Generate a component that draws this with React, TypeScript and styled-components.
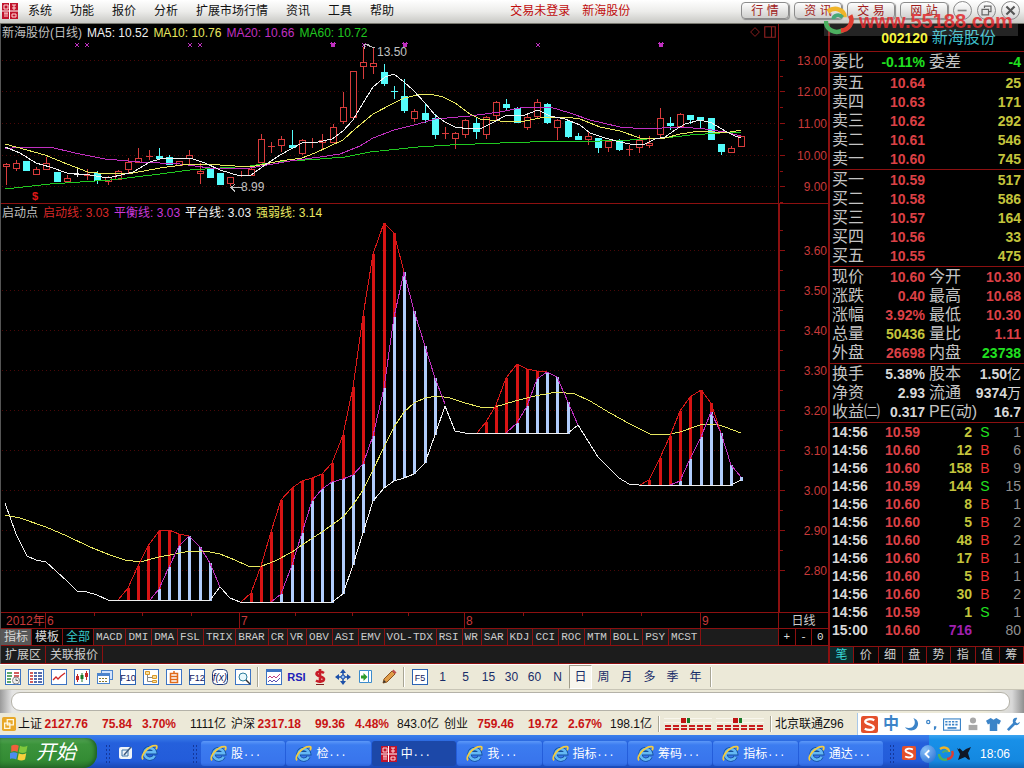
import React from "react";
import styled, { createGlobalStyle, css } from "styled-components";

const GlobalStyle = createGlobalStyle`
  * { box-sizing: border-box; }
  body {
    margin: 0;
    background: #000;
    font-family: "Liberation Sans", "Noto Sans CJK SC", sans-serif;
    font-size: 12px;
    line-height: 16px;
  }
  button {
    font: inherit;
    color: inherit;
    background: none;
    border: 0;
    padding: 0;
    margin: 0;
    white-space: nowrap;
  }
  svg { display: block; flex: none; }
`;

const LINE = "#8c1010";
const GRID = "#4a0808";
const RED = "#dc4046";
const YELLOW = "#c4c43c";
const GREEN = "#20e020";
const GREY = "#c4c4c4";

/* ---------- page frame ---------- */

const Page = styled.div`
  position: relative;
  display: flex;
  flex-direction: column;
  overflow: hidden;
`;

const MenuBar = styled.header`
  display: flex;
  align-items: center;
  height: 24px;
  padding: 0 4px 2px 2px;
  background: linear-gradient(#ffffff, #ececea 50%, #c8c8c4);
  border-bottom: 1px solid #77776f;
`;

const Menu = styled.nav`
  display: flex;
  gap: 18px;
  margin-left: 10px;
`;

const MenuItem = styled.button`
  color: #111;
`;

const Notice = styled.div`
  display: flex;
  flex: 1;
  gap: 12px;
  margin-left: 116px;
  color: #c00c0c;
`;

const Shortcuts = styled.div`
  display: flex;
  align-items: center;
  gap: 5px;
`;

const Pill = styled.button`
  width: 48px;
  height: 17px;
  line-height: 14px;
  color: #a01c1c;
  border: 1px solid #8c8c8c;
  border-radius: 4px;
  background: linear-gradient(#fdfdfd, #cfcfcd);
  box-shadow: 1px 1px 1px #8a8a8a;
`;

const WindowButton = styled.button`
  display: grid;
  place-items: center;
  width: 19px;
  height: 19px;
  border: 1px solid #8a8a8a;
  border-radius: 50%;
  background: linear-gradient(#fff, #d4d4d4);
`;

const Watermark = styled.div`
  position: absolute;
  top: 6px;
  right: 6px;
  display: flex;
  align-items: center;
  gap: 5px;
  width: 194px;
  height: 30px;
  color: rgba(226, 40, 44, 0.85);
  font-size: 20px;
  font-weight: 700;
  line-height: 30px;
  background: linear-gradient(transparent 18px, rgba(255, 255, 255, 0.14) 18px);
  pointer-events: none;
`;

const Main = styled.main`
  display: grid;
  grid-template-columns: minmax(0, 1fr) 196px;
`;

/* ---------- charts ---------- */

const ChartArea = styled.section`
  display: grid;
  grid-template-columns: minmax(0, 1fr) 50px;
  grid-template-rows: 180px 409px 16px 17px 18px;
  border-left: 1px solid #555;
`;

const Pane = styled.div`
  display: flex;
  flex-direction: column;
  min-width: 0;
  border-bottom: 1px solid ${LINE};
`;

const Axis = styled.div<{ $wide?: boolean }>`
  border-left: ${(p) => (p.$wide ? 2 : 1)}px solid ${LINE};
  border-bottom: 1px solid ${LINE};
`;

const Legend = styled.div`
  display: flex;
  gap: 5px;
  height: 16px;
  padding: 0 2px 0 1px;
  line-height: 18px;
  white-space: nowrap;
`;

const LegendText = styled.span<{ $color: string }>`
  color: ${(p) => p.$color};
`;

const LegendTools = styled.div`
  display: flex;
  gap: 4px;
  align-items: center;
  margin-left: auto;
`;

const Drawing = styled.svg<{ $height: number }>`
  width: 100%;
  height: ${(p) => p.$height}px;
  font-size: 12px;
`;

const TabStrip = styled.div`
  display: flex;
  min-width: 0;
  overflow: hidden;
  background: #1c1c1c;
  border-bottom: 1px solid ${LINE};
`;

const IndicatorTab = styled.button`
  padding: 0 3px 0 2px;
  color: #ccc;
  font-family: "Liberation Mono", monospace;
  font-size: 11px;
  border-right: 1px solid ${LINE};
`;

const GroupTab = styled.button<{ $tone?: "on" | "cyan" }>`
  padding: 0 3px;
  color: ${(p) => (p.$tone === "cyan" ? "#38c8c8" : "#d8d8d8")};
  background: ${(p) => (p.$tone === "on" ? "#585858" : "#050505")};
  border-right: 1px solid ${LINE};
`;

const ExtraStrip = styled(TabStrip)`
  grid-column: 1 / -1;
`;

const ExtraTab = styled.button`
  padding: 0 4px;
  color: #ccc;
  border-right: 1px solid ${LINE};
`;

const PeriodCell = styled.div`
  color: #ccc;
  text-align: center;
  border-left: 1px solid ${LINE};
  border-bottom: 1px solid ${LINE};
`;

const ZoomCell = styled.div`
  display: flex;
  border-left: 1px solid ${LINE};
  border-bottom: 1px solid ${LINE};
`;

const ZoomButton = styled.button`
  flex: 1;
  color: #ddd;
  font-family: "Liberation Mono", monospace;
  font-size: 11px;
  & + & { border-left: 1px solid ${LINE}; }
`;

/* ---------- quote panel ---------- */

const Panel = styled.aside`
  display: flex;
  flex-direction: column;
  border-left: 2px solid ${LINE};
  border-bottom: 1px solid ${LINE};
`;

const StockTitle = styled.h1`
  display: flex;
  justify-content: center;
  gap: 4px;
  height: 27px;
  margin: 0;
  padding-left: 23px;
  color: #3cbcc8;
  font-size: 16px;
  font-weight: 400;
  line-height: 28px;
`;

const Code = styled.span`
  color: #f4f430;
  font-size: 14px;
  font-weight: 700;
`;

const Block = styled.div<{ $grow?: boolean }>`
  flex: ${(p) => (p.$grow ? 1 : "none")};
  padding: 0 3px 1px 2px;
  border-top: 1px solid ${LINE};
`;

const DataTable = styled.table<{ $row: number }>`
  width: 100%;
  table-layout: fixed;
  border-collapse: collapse;
  tr { height: ${(p) => p.$row}px; }
  th, td {
    padding: 0;
    line-height: 16px;
    white-space: nowrap;
    vertical-align: middle;
  }
`;

const Label = styled.th<{ $inset?: boolean }>`
  && { padding-left: ${(p) => (p.$inset ? 4 : 0)}px; }
  color: ${GREY};
  font-size: 16px;
  font-weight: 400;
  text-align: left;
`;

const Value = styled.td<{ $color: string; $light?: boolean }>`
  color: ${(p) => p.$color};
  font-size: 14px;
  font-weight: ${(p) => (p.$light ? 400 : 700)};
  text-align: right;
`;

const Unit = styled.span`
  font-weight: 400;
  line-height: 1;
`;

const Side = styled(Value)`
  text-align: center;
`;

const Time = styled(Value)`
  text-align: left;
`;

const PanelTabs = styled.div`
  display: flex;
  height: 17px;
  border-top: 1px solid ${LINE};
`;

const PanelTab = styled.button<{ $active?: boolean }>`
  flex: 1;
  color: ${(p) => (p.$active ? "#38d8d8" : "#ccc")};
  background: ${(p) => (p.$active ? "#0c2c2c" : "#080808")};
  border-right: 1px solid ${LINE};
`;

/* ---------- toolbar ---------- */

const ToolBar = styled.div`
  display: flex;
  height: 25px;
  padding-left: 1px;
  background: #ece9d8;
  border-top: 1px solid #fff;
`;

const pressed = css`
  background: #f8f6ee;
  border: 1px solid #a8a594;
  border-color: #a09c8a #fff #fff #a09c8a;
`;

const Tool = styled.button<{ $on?: boolean; $bold?: boolean }>`
  display: grid;
  place-items: center;
  width: 23px;
  color: ${(p) => (p.$bold ? "#2020b8" : "#182c68")};
  font-size: ${(p) => (p.$bold ? 11 : 12)}px;
  font-weight: ${(p) => (p.$bold ? 700 : 400)};
  ${(p) => p.$on && pressed}
`;

const Rule = styled.span`
  width: 2px;
  margin: 2px 3px;
  border-left: 1px solid #a8a594;
  border-right: 1px solid #fff;
`;

const ScrollBar = styled.div`
  height: 24px;
  padding: 2px 14px 2px 11px;
  background: linear-gradient(90deg, #9a9a9a, #e4e4e4 12px, #ece9d8 40px, #ece9d8 calc(100% - 40px), #d8d8d8 calc(100% - 12px), #8f8f8f);
  border-top: 1px solid #c8c5b6;
`;

const Thumb = styled.div`
  height: 19px;
  background: #fff;
  border: 1px solid #b4b2a8;
  border-radius: 9px;
`;

/* ---------- status bar ---------- */

const StatusBar = styled.footer`
  display: flex;
  align-items: center;
  height: 22px;
  padding-left: 2px;
  color: #111;
  background: #ece9d8;
  white-space: nowrap;
`;

const IndexQuote = styled.div`
  display: grid;
  grid-template-columns: 25px 45px 44px 44px 50px;
  margin-left: 2px;
  margin-right: 3px;
  text-align: right;
`;

const IndexName = styled.span`
  text-align: left;
`;

const IndexValue = styled.b`
  color: #c81414;
`;

const ImeBar = styled.div`
  display: flex;
  flex: none;
  align-items: center;
  justify-content: space-around;
  width: 167px;
  height: 22px;
  margin-left: auto;
  color: #3c84c8;
  font-size: 16px;
  font-weight: 700;
  background: #fff;
  border-left: 1px solid #a8c8e8;
`;

/* ---------- task bar ---------- */

const TaskBar = styled.div`
  display: flex;
  height: 33px;
  color: #fff;
  background: linear-gradient(#3a80ec, #3272e4 4px, #2560dc 8px, #235cda 26px, #1a48b4);
`;

const StartButton = styled.button`
  display: flex;
  align-items: center;
  gap: 6px;
  width: 97px;
  height: 30px;
  margin-top: 3px;
  padding: 0 0 3px 10px;
  font-size: 20px;
  font-style: italic;
  border-radius: 0 10px 14px 0;
  background: linear-gradient(#5cac5c, #3c943c 6px, #348c34 22px, #2a702c);
  box-shadow: inset -2px 0 4px #1c5c20;
`;

const Grip = styled.span<{ $gap: number }>`
  width: 5px;
  margin: 9px ${(p) => p.$gap}px 4px;
  background-image: radial-gradient(circle, #14389c 1px, transparent 1px);
  background-size: 3px 4px;
`;

const QuickLaunch = styled.div`
  display: flex;
  align-items: center;
  gap: 7px;
  width: 70px;
  padding-top: 2px;
`;

const TaskList = styled.div`
  display: flex;
  flex: 1;
  gap: 1px;
  padding: 6px 0 2px;
`;

const Task = styled.button<{ $active?: boolean }>`
  display: flex;
  flex: 1 1 0;
  align-items: center;
  gap: 4px;
  max-width: 160px;
  padding-left: 9px;
  border-radius: 3px;
  background: ${(p) =>
    p.$active
      ? "#1c48a8"
      : "linear-gradient(#5c98f8, #3c7cf0 4px, #3874ec 22px, #2c64d8)"};
`;

const Dots = styled.span`
  margin-left: -4px;
  font-family: "Liberation Mono", monospace;
  font-size: 10px;
`;

const LanguageBar = styled.div`
  display: flex;
  width: 46px;
`;

const LanguageButton = styled.button`
  display: grid;
  place-items: center;
  width: 18px;
  padding-top: 2px;
`;

const Tray = styled.div`
  display: flex;
  align-items: center;
  gap: 2px;
  width: 95px;
  padding: 4px 0 0 8px;
  background: linear-gradient(#3ca4f0, #1890e8 5px, #1488e0 26px, #1068b8);
`;

const Hide = styled.button`
  display: grid;
  place-items: center;
  width: 16px;
  height: 18px;
  margin-left: -17px;
  border-radius: 50%;
  background: radial-gradient(circle at 5px 5px, #88c0f8, #2068d0);
`;

const Clock = styled.time`
  margin-left: 6px;
`;

/* ---------- chart data, in drawing units ---------- */

const barX = (i: number) => Math.round(5.5 + 10.22 * i);

// kind, high, body top, body bottom, low
type Candle = [string, number, number, number, number];
const candles: Candle[] = [
  ["r", 163, 164, 166, 185], ["r", 160, 163, 168, 171], ["c", 161, 161, 170, 170], ["r", 167, 169, 174, 174],
  ["r", 157, 163, 169, 169], ["c", 172, 172, 181, 181], ["r", 175, 178, 181, 181], ["w", 168, 174, 174, 177],
  ["r", 169, 175, 175, 180], ["c", 171, 173, 180, 184], ["r", 176, 177, 181, 185], ["r", 170, 171, 179, 179],
  ["r", 158, 162, 169, 173], ["r", 148, 158, 162, 162], ["r", 150, 156, 156, 160], ["c", 148, 156, 158, 160],
  ["c", 155, 157, 164, 164], ["r", 161, 161, 165, 165], ["r", 150, 155, 158, 164], ["r", 163, 171, 173, 184],
  ["c", 168, 169, 177, 178], ["c", 173, 173, 184, 184], ["r", 177, 177, 183, 186], ["r", 171, 175, 175, 177],
  ["r", 165, 169, 175, 175], ["r", 134, 139, 162, 162], ["r", 142, 146, 146, 153], ["r", 136, 139, 145, 152],
  ["c", 130, 145, 147, 149], ["r", 139, 140, 153, 155], ["r", 138, 142, 142, 148], ["r", 134, 140, 142, 150],
  ["r", 124, 127, 142, 143], ["r", 92, 107, 121, 124], ["r", 71, 71, 117, 120], ["r", 47, 62, 66, 79],
  ["r", 48, 63, 66, 74], ["c", 64, 72, 83, 86], ["c", 86, 91, 91, 99], ["c", 79, 96, 110, 113],
  ["r", 109, 111, 118, 122], ["c", 104, 113, 119, 123], ["c", 114, 118, 134, 139], ["r", 127, 133, 133, 139],
  ["r", 132, 133, 138, 149], ["r", 119, 120, 134, 138], ["c", 117, 123, 131, 139], ["r", 116, 117, 134, 139],
  ["r", 101, 102, 115, 121], ["c", 99, 104, 107, 110], ["c", 107, 108, 122, 123], ["r", 115, 117, 127, 130],
  ["r", 99, 102, 116, 119], ["c", 103, 104, 122, 124], ["r", 119, 120, 127, 140], ["c", 120, 121, 136, 138],
  ["c", 133, 136, 139, 140], ["r", 131, 136, 139, 145], ["c", 138, 138, 147, 153], ["r", 140, 141, 147, 152],
  ["c", 139, 140, 149, 151], ["r", 145, 149, 149, 156], ["r", 135, 140, 147, 153], ["r", 136, 143, 145, 148],
  ["r", 108, 118, 134, 137], ["c", 117, 123, 125, 130], ["r", 113, 114, 126, 126], ["c", 115, 115, 119, 124],
  ["c", 117, 117, 119, 129], ["c", 118, 118, 139, 139], ["c", 144, 144, 151, 155], ["r", 146, 148, 152, 153],
  ["r", 136, 136, 146, 146],
];

const averages = [
  { color: "#20c820", points: "5,189 50,184 110,180 160,174 190,170 220,168 250,166 275,162 320,159 345,157 370,152 418,147 450,145 500,143 560,141 600,141 630,140 665,138 690,135 720,133 741,132" },
  { color: "#c030c0", points: "5,149 20,147 50,147 75,153 105,159 140,162 180,164 210,168 250,168 290,161 320,157 340,154 360,146 373,138 394,130 418,124 435,119 470,116 500,112 520,108 550,107 570,113 590,120 620,127 645,129 680,127 705,129 725,132 741,136" },
  { color: "#e8e860", points: "5,144 45,155 67,164 88,172 108,174 133,173 160,168 190,164 220,165 250,167 280,161 302,158 315,153 330,146 343,140 355,129 373,114 394,103 404,98 418,95 430,94 443,97 455,103 470,114 480,119 500,121 525,121 545,117 565,117 580,119 600,127 620,131 640,138 650,139 665,138 680,134 700,131 725,133 741,130" },
  { color: "#f0f0f0", points: "5,147 20,153 36,163 50,167 67,173 90,175 108,178 125,174 133,172 150,162 160,159 190,158 205,163 220,170 240,176 251,175 265,165 280,155 302,143 318,142 332,139 343,131 353,120 363,103 373,87 385,77 394,74 404,82 413,90 425,103 435,115 445,122 455,127 470,129 482,128 492,123 505,116 525,115 538,110 550,116 565,119 580,125 590,133 605,138 620,142 630,144 645,144 655,139 665,137 675,130 685,124 700,120 712,123 725,131 735,136 741,138" },
];

const signalLines = [
  { color: "#f0f0f0", points: "5,503 16,534 27,556 36,560 46,562 56,571 67,581 77,591 87,592 97,595 108,600 210,600 220,587 230,598 240,602 332,602 343,594 353,565 363,533 373,501 384,488 394,481 404,478 414,474 425,463 435,435 445,406 455,431 465,433 568,433 578,425 598,457 609,468 619,478 629,484 639,485 731,485 741,480" },
  { color: "#e8e860", points: "5,515 20,518 46,527 67,536 90,547 110,555 125,560 140,562 159,557 175,554 190,551 205,551 220,554 235,560 248,566 262,566 275,561 292,552 305,543 322,532 343,517 353,505 363,490 373,470 384,447 394,427 404,412 414,403 425,398 438,396 450,398 465,403 480,407 495,407 515,401 535,396 557,392 575,394 590,401 610,413 630,424 650,434 665,435 680,432 700,425 715,424 725,427 741,433" },
  { color: "#d81818", points: "118,600 128,588 138,566 148,546 159,531 169,530 179,534 189,536" },
  { color: "#d81818", points: "241,602 251,593 261,566 271,532 281,500 292,488 302,481 312,478 322,474 332,463 343,435 353,387 363,316 373,254 384,223 394,233 404,272" },
  { color: "#d81818", points: "477,433 486,422 496,405 506,378 517,364 527,369 537,371 547,372" },
  { color: "#d81818", points: "640,485 649,480 660,458 670,436 680,411 690,397 701,390 711,403 721,433" },
  { color: "#c030c0", points: "150,600 159,589 169,567 179,546 189,536 200,547 210,563 220,587" },
  { color: "#c030c0", points: "271,602 281,594 292,565 302,533 312,501 322,489 332,482 343,479 353,475 363,464 373,436 384,388 394,317 404,272 414,311 425,346 435,378 445,404" },
  { color: "#c030c0", points: "506,433 517,423 527,406 537,379 547,372 557,377 568,402 578,425" },
  { color: "#c030c0", points: "670,485 680,481 690,459 701,437 711,412 721,433 731,465 741,477" },
];

// x, top of red part, top of blue part, foot
const columns: number[][] = [
  [128, 588, 601, 601], [138, 566, 601, 601], [148, 546, 601, 601], [159, 531, 589, 601], [169, 530, 567, 601],
  [179, 534, 546, 601], [189, 536, 536, 601], [200, 547, 547, 601], [210, 563, 563, 601],
  [251, 593, 603, 603], [261, 566, 603, 603], [271, 532, 603, 603], [281, 500, 594, 603], [292, 488, 565, 603],
  [302, 481, 533, 603], [312, 478, 501, 603], [322, 474, 489, 603], [332, 463, 482, 603], [343, 435, 479, 594],
  [353, 387, 475, 565], [363, 316, 464, 533], [373, 254, 436, 501], [384, 223, 388, 488], [394, 233, 317, 481],
  [404, 272, 272, 478], [414, 311, 311, 474], [425, 346, 346, 463], [435, 378, 378, 435],
  [486, 422, 434, 434], [496, 405, 434, 434], [506, 378, 434, 434], [517, 364, 423, 434], [527, 369, 406, 434],
  [537, 371, 379, 434], [547, 372, 372, 434], [557, 377, 377, 434], [568, 402, 402, 434],
  [649, 480, 486, 486], [660, 458, 486, 486], [670, 436, 486, 486], [680, 411, 481, 486], [690, 397, 459, 486],
  [701, 390, 437, 486], [711, 403, 412, 486], [721, 433, 433, 486], [731, 465, 465, 486], [741, 477, 477, 481],
];

const priceLevels = [60, 91, 123, 155, 186];
const signalLevels = [250, 290, 330, 370, 410, 450, 490, 530, 570];

const GridLines = ({ levels }: { levels: number[] }) => (
  <>
    {levels.map((y) => (
      <line key={y} x1="2" x2="778" y1={y + 0.5} y2={y + 0.5} stroke={GRID} strokeDasharray="1 3" />
    ))}
  </>
);

const Lines = ({ items }: { items: { color: string; points: string }[] }) => (
  <>
    {items.map((l) => (
      <polyline key={l.points} points={l.points} fill="none" stroke={l.color} />
    ))}
  </>
);

const PriceChart = () => (
  <Drawing $height={163} viewBox="1 40 777 163" preserveAspectRatio="xMinYMin meet" shapeRendering="crispEdges">
    <GridLines levels={priceLevels} />
    {candles.map(([kind, hi, top, bottom, lo], i) => {
      const x = barX(i);
      const color = kind === "r" ? "#d83c3c" : kind === "c" ? "#54fcfc" : "#f4f4f4";
      return (
        <g key={i} stroke={color} fill={kind === "r" ? "#000" : color}>
          <line x1={x + 0.5} x2={x + 0.5} y1={hi} y2={lo} />
          {top === bottom ? (
            <line x1={x - 3} x2={x + 4} y1={top + 0.5} y2={top + 0.5} />
          ) : (
            <rect x={x - 2.5} y={top + 0.5} width="6" height={bottom - top} />
          )}
        </g>
      );
    })}
    <Lines items={averages} />
    {[77, 87, 190, 200, 333, 364, 405, 538, 661].map((x) => (
      <path key={x} d={`M${x - 2} 43l4 4m0-4l-4 4`} stroke="#c030c0" strokeWidth={[333, 405, 661].includes(x) ? 2 : 1} />
    ))}
    <path d="M375 48L364 44m0 5v-5h5M242 187.500h-11m4-3l-4 3 4 4" stroke="#c0c0c0" fill="none" />
    <text x="377" y="56" fill="#c0c0c0">13.50</text>
    <text x="241" y="191" fill="#c0c0c0">8.99</text>
    <text x="32" y="200" fill="#e01818" fontSize="11" fontWeight="700">$</text>
  </Drawing>
);

const SignalChart = () => (
  <Drawing $height={392} viewBox="1 220 777 392" preserveAspectRatio="xMinYMin meet" shapeRendering="crispEdges">
    <GridLines levels={signalLevels} />
    {columns.map(([x, red, blue, foot]) => (
      <g key={x}>
        <rect x={x - 1} y={red} width="3" height={blue - red} fill="#d81414" />
        <rect x={x - 1} y={blue} width="3" height={foot - blue} fill="#b0ccfc" />
      </g>
    ))}
    <Lines items={signalLines} />
  </Drawing>
);

const AxisScale = ({ top, height, levels, minor, first, step }: {
  top: number; height: number; levels: number[]; minor: number; first: number; step: number;
}) => (
  <Drawing $height={height} viewBox={`0 ${top} 48 ${height}`} preserveAspectRatio="xMaxYMin meet">
    {levels.map((y, i) => (
      <g key={y}>
        <path d={`M0 ${y + 0.5}h5M0 ${y + minor + 0.5}h3`} stroke={LINE} />
        <text x="47" y={y + 5} textAnchor="end" fill="#c83a3a">{(first - step * i).toFixed(2)}</text>
      </g>
    ))}
  </Drawing>
);

const months: [number, string][] = [[45, "6"], [239, "7"], [464, "8"], [700, "9"]];

const TimeScale = () => (
  <Drawing $height={15} viewBox="1 613 777 15" preserveAspectRatio="xMinYMin meet" fill="#c83a3a">
    <text x="6" y="625">2012年</text>
    {months.map(([x, name]) => (
      <g key={x}>
        <line x1={x + 0.5} x2={x + 0.5} y1="613" y2="628" stroke={LINE} />
        <text x={x + 2} y="625">{name}</text>
      </g>
    ))}
    {[94, 142, 191, 295, 352, 408, 523, 582, 641].map((x) => (
      <line key={x} x1={x + 0.5} x2={x + 0.5} y1="613" y2="616" stroke={LINE} />
    ))}
  </Drawing>
);

/* ---------- icons ---------- */

const Icon = ({ size = 16, children }: { size?: number; children: React.ReactNode }) => (
  <svg width={size} height={size} viewBox="0 0 16 16" fill="none" aria-hidden="true">{children}</svg>
);

const Frame = () => <rect x="0.500" y="0.500" width="15" height="15" fill="#fff" stroke="#3c74c4" />;

const FramedText = ({ text }: { text: string }) => (
  <Icon>
    <rect x="0.500" y="0.500" width="15" height="15" fill="#fff" stroke="#2c64b4" />
    <text x="8" y="12" textAnchor="middle" fontSize="9" fill="#102060">{text}</text>
  </Icon>
);

const BrandIcon = ({ size }: { size: number }) => (
  <Icon size={size}>
    <rect width="16" height="16" fill="#c0142c" />
    <path d="M7.500 0v16M0 8h16" stroke="#fff" />
    <path d="M2 2h4v4H2zM10 2h4M12 2v5M10 5h4M2 10h4M3 10v4M5 10v4M10 11h4v3h-4z" stroke="#ffd8d8" />
  </Icon>
);

const IeIcon = ({ size = 17 }: { size?: number }) => (
  <Icon size={size}>
    <path d="M12.800 11a5 5 0 1 1 .4-3.200H4.500" stroke="#1450a0" strokeWidth="4" />
    <path d="M12.800 11a5 5 0 1 1 .4-3.200H4.500" stroke="#64b8f4" strokeWidth="2.400" />
    <path d="M2 14.500C-1.500 11.500 7 1 14 1.500c1.500.2 1 2 .2 3.400" stroke="#f4cc40" strokeWidth="1.600" />
  </Icon>
);

const Swirl = ({ size = 30 }: { size?: number }) => (
  <Icon size={size}>
    <path d="M2 3c4-3 9-1 9 3" stroke="#f0b428" strokeWidth="2.400" />
    <path d="M1 8c0 5 5 7 9 5" stroke="#4cb060" strokeWidth="2.400" />
    <path d="M14 5c2 4-1 8-5 8" stroke="#e03c30" strokeWidth="2.400" />
    <path d="M5 7c0-2 3-3 5-1" stroke="#48a878" strokeWidth="2" />
  </Icon>
);

const SogouIcon = ({ size }: { size: number }) => (
  <Icon size={size}>
    <rect width="16" height="16" rx="2" fill="#e4502c" />
    <path d="M12.500 4C9 2.200 4 3 4 5.500S12 8 12 10.800 6.500 13.500 3.500 12" stroke="#fff" strokeWidth="2.200" />
  </Icon>
);

const toolIcons: [string, React.ReactNode][] = [
  ["分时", <Icon><Frame /><path d="M2 4h5M2 7h5M2 10h4M2 13h4" stroke="#2c8c3c" strokeWidth="1.500" /><path d="M9 4h5M9 7h5" stroke="#c42828" strokeWidth="1.500" /><circle cx="11" cy="11.500" r="3.500" fill="#eee" stroke="#888" /><path d="M11 9.500v2h2" stroke="#666" /></Icon>],
  ["报价表", <Icon><Frame /><path d="M2 4h3M2 7h3M2 10h3M2 13h3" stroke="#c42828" strokeWidth="1.500" /><path d="M6 4h3M6 7h3M6 10h3M6 13h3M10 4h4M10 7h4M10 10h4M10 13h4" stroke="#203c90" strokeWidth="1.500" /></Icon>],
  ["走势", <Icon><Frame /><path d="M2 11l3-3 2 2 3-3 4-3" stroke="#d02828" strokeWidth="1.300" /></Icon>],
  ["K线", <Icon><Frame /><path d="M3.500 5v8M12.500 2v9" stroke="#c42828" /><path d="M8 4v9" stroke="#187828" /><path d="M2 7h3v4H2zM11 4h3v4h-3z" fill="#c42828" /><path d="M6.500 6h3v4h-3z" fill="#187828" /></Icon>],
  ["多窗", <Icon><rect x="4.500" y="1.500" width="11" height="9" fill="#d4e4fc" stroke="#4c84cc" /><rect x="0.500" y="4.500" width="12" height="10" fill="#fff" stroke="#4c84cc" /><path d="M1 6h11" stroke="#4c84cc" strokeWidth="2" /><path d="M2 9.500h9M2 12.500h9" stroke="#8c7c30" strokeDasharray="2 1" /></Icon>],
  ["F10", <FramedText text="F10" />],
  ["板块", <Icon><Frame /><path d="M4.500 6v6.500H9M4.500 8.500H9" stroke="#888" /><path d="M2.500 2.500h4v3h-4zM9.500 6.500h4v3h-4zM9.500 11.500h4v2h-4z" fill="#f8e0a0" stroke="#d89828" /></Icon>],
  ["自选", <Icon><Frame /><path d="M4.500 4.500h7v9h-7zM4.500 7.500h7M4.500 10.500h7M8 2v2" stroke="#e06c1c" strokeWidth="1.500" /></Icon>],
  ["F12", <FramedText text="F12" />],
  ["公式", <Icon><rect x="0.500" y="0.500" width="15" height="15" rx="4" fill="#fff" stroke="#203c80" /><text x="8" y="12" textAnchor="middle" fontSize="10" fontStyle="italic" fill="#102060">f(x)</text></Icon>],
  ["查找", <Icon><Frame /><circle cx="8" cy="8" r="4" fill="#e8f8fc" stroke="#2c7c9c" /><path d="M11 11l4 4" stroke="#333" strokeWidth="1.500" /></Icon>],
];

const toolIcons2: [string, React.ReactNode][] = [
  ["指标图", <Icon><Frame /><path d="M1 2h14" stroke="#3c74c4" strokeWidth="2" /><path d="M2 9l2-2 2 2 2-2 2 2 4-4" stroke="#c04080" /><path d="M2 13l2-2 2 2 2-2 2 2 4-4" stroke="#5c50b0" /></Icon>],
  ["RSI", "RSI"],
  ["资金", <Icon><path d="M12 4C9 2 4.500 2.500 4.500 5S12 7.500 12 10s-5 3.500-8 1.500M8 0v14" stroke="#c81c28" strokeWidth="2.600" /><path d="M4 15.500h8" stroke="#802020" /></Icon>],
  ["移动", <Icon><path d="M8 0l3 4H5zM8 16l3-4H5zM0 8l4-3v6zM16 8l-4-3v6z" fill="#1c50a8" /><path d="M8 4v8M4 8h8" stroke="#1c50a8" strokeWidth="1.500" /><circle cx="8" cy="8" r="2" fill="#9cc4f4" stroke="#1c50a8" /></Icon>],
  ["切换", <Icon><path d="M1.500 1.500h9v12h-9zM10.500 1.500h3v12h-3" fill="#fff" stroke="#3c8ccc" /><path d="M3 6.500h2.500V4L9.500 8l-4 4V9.500H3z" fill="#2c9c2c" /></Icon>],
  ["画线", <Icon><path d="M2 14l1-4 8-8 3 3-8 8z" fill="#e09c48" stroke="#8c5420" /><path d="M11 2l3 3 1.500-1.500-3-3z" fill="#c05050" /><path d="M2 14l1-3 2 2z" fill="#333" /></Icon>],
];

/* ---------- quote data ---------- */

const menus = ["系统", "功能", "报价", "分析", "扩展市场行情", "资讯", "工具", "帮助"];
const indicators = "MACD DMI DMA FSL TRIX BRAR CR VR OBV ASI EMV VOL-TDX RSI WR SAR KDJ CCI ROC MTM BOLL PSY MCST".split(" ");

const asks = [["卖五", "10.64", "25"], ["卖四", "10.63", "171"], ["卖三", "10.62", "292"], ["卖二", "10.61", "546"], ["卖一", "10.60", "745"]];
const bids = [["买一", "10.59", "517"], ["买二", "10.58", "586"], ["买三", "10.57", "164"], ["买四", "10.56", "33"], ["买五", "10.55", "475"]];

type Pair = [string, string, string, string, string, string, string?];
const ratio: Pair[] = [["委比", "-0.11%", GREEN, "委差", "-4", GREEN]];
const today: Pair[] = [
  ["现价", "10.60", RED, "今开", "10.30", RED],
  ["涨跌", "0.40", RED, "最高", "10.68", RED],
  ["涨幅", "3.92%", RED, "最低", "10.30", RED],
  ["总量", "50436", YELLOW, "量比", "1.11", RED],
  ["外盘", "26698", RED, "内盘", "23738", GREEN],
];
const finance: Pair[] = [
  ["换手", "5.38%", "#d8d8d8", "股本", "1.50", "#d8d8d8", "亿"],
  ["净资", "2.93", "#d8d8d8", "流通", "9374", "#d8d8d8", "万"],
  ["收益㈡", "0.317", "#d8d8d8", "PE(动)", "16.7", "#d8d8d8"],
];

const ticks = [
  ["14:56", "10.59", "2", "S", "1"], ["14:56", "10.60", "12", "B", "6"], ["14:56", "10.60", "158", "B", "9"],
  ["14:56", "10.59", "144", "S", "15"], ["14:56", "10.60", "8", "B", "1"], ["14:56", "10.60", "5", "B", "2"],
  ["14:56", "10.60", "48", "B", "2"], ["14:56", "10.60", "17", "B", "1"], ["14:56", "10.60", "5", "B", "1"],
  ["14:56", "10.60", "30", "B", "2"], ["14:56", "10.59", "1", "S", "1"], ["15:00", "10.60", "716", "", "80"],
];

const Columns = ({ widths }: { widths: number[] }) => (
  <colgroup>
    {widths.map((w, i) => <col key={i} width={w || undefined} />)}
  </colgroup>
);

const PairBlock = ({ rows }: { rows: Pair[] }) => (
  <Block>
    <DataTable $row={19}>
      <Columns widths={[48, 45, 46, 0]} />
      <tbody>
        {rows.map(([a, va, ca, b, vb, cb, unit]) => (
          <tr key={a}>
            <Label scope="row">{a}</Label>
            <Value $color={ca}>{va}</Value>
            <Label scope="row" $inset>{b}</Label>
            <Value $color={cb}>{vb}{unit && <Unit>{unit}</Unit>}</Value>
          </tr>
        ))}
      </tbody>
    </DataTable>
  </Block>
);

const DepthBlock = ({ rows }: { rows: string[][] }) => (
  <Block>
    <DataTable $row={19}>
      <Columns widths={[48, 45, 0]} />
      <tbody>
        {rows.map(([name, price, volume]) => (
          <tr key={name}>
            <Label scope="row">{name}</Label>
            <Value $color={RED}>{price}</Value>
            <Value $color={YELLOW}>{volume}</Value>
          </tr>
        ))}
      </tbody>
    </DataTable>
  </Block>
);

const indexes = [
  ["上证", "2127.76", "75.84", "3.70%", "1111亿"],
  ["沪深", "2317.18", "99.36", "4.48%", "843.0亿"],
  ["创业", "759.46", "19.72", "2.67%", "198.1亿"],
];

const tasks = ["股", "检", "中", "我", "指标", "筹码", "指标", "通达"];

const Meter = () => (
  <svg width="104" height="18" viewBox="0 0 104 18" aria-hidden="true" shapeRendering="crispEdges">
    <path d="M1 3.500h48M53 3.500h48M1 7.500h48M53 7.500h48" stroke="#f8f6ec" />
    {[0, 52].map((dx) => (
      <g key={dx}>
        <path d={`M${2 + dx} 11h46M${2 + dx} 14h46`} stroke="#c81c1c" strokeWidth="2" strokeDasharray="6 2" />
        <path d={`M${18 + dx} 3h5v5h-5z`} fill="#c01414" />
        <path d={`M${24 + dx} 3h3v5h-3z`} fill="#187828" />
      </g>
    ))}
  </svg>
);

export default function App() {
  return (
    <Page>
      <GlobalStyle />
      <MenuBar>
        <BrandIcon size={16} />
        <Menu>
          {menus.map((m) => <MenuItem key={m}>{m}</MenuItem>)}
        </Menu>
        <Notice><span>交易未登录</span><span>新海股份</span></Notice>
        <Shortcuts>
          {["行 情", "资 讯", "交 易", "网 站"].map((s) => <Pill key={s}>{s}</Pill>)}
          <WindowButton aria-label="最小化"><Icon size={13}><path d="M2 8h11" stroke="#888" strokeWidth="2" /></Icon></WindowButton>
          <WindowButton aria-label="还原"><Icon size={13}><path d="M5.500 5V2.500h8v7H11M2.500 6.500h8v7h-8z" stroke="#666" strokeWidth="1.500" /></Icon></WindowButton>
          <WindowButton aria-label="关闭"><Icon size={13}><path d="M3 3l10 10M13 3L3 13" stroke="#555" strokeWidth="2.600" /></Icon></WindowButton>
        </Shortcuts>
      </MenuBar>

      <Main>
        <ChartArea>
          <Pane>
            <Legend>
              <LegendText $color="#c0c0c0">新海股份(日线)</LegendText>
              <LegendText $color="#f0f0f0">MA5: 10.52</LegendText>
              <LegendText $color="#e8e860">MA10: 10.76</LegendText>
              <LegendText $color="#c030c0">MA20: 10.66</LegendText>
              <LegendText $color="#20c820">MA60: 10.72</LegendText>
              <LegendTools>
                <Icon size={10}><path d="M8 1l7 7-7 7-7-7z" stroke="#902020" strokeWidth="1.500" /></Icon>
                <Icon size={12}><path d="M1 1h14v14H1zM10 1v14" stroke="#902020" strokeWidth="1.500" /></Icon>
              </LegendTools>
            </Legend>
            <PriceChart />
          </Pane>
          <Axis>
            <AxisScale top={24} height={179} levels={priceLevels} minor={16} first={13} step={1} />
          </Axis>
          <Pane>
            <Legend>
              <LegendText $color="#c0c0c0">启动点</LegendText>
              <LegendText $color="#d82828">启动线: 3.03</LegendText>
              <LegendText $color="#c838d8">平衡线: 3.03</LegendText>
              <LegendText $color="#f0f0f0">平台线: 3.03</LegendText>
              <LegendText $color="#e8e860">强弱线: 3.14</LegendText>
            </Legend>
            <SignalChart />
          </Pane>
          <Axis $wide>
            <AxisScale top={204} height={408} levels={signalLevels} minor={-20} first={3.6} step={0.1} />
          </Axis>
          <Pane><TimeScale /></Pane>
          <PeriodCell>日线</PeriodCell>
          <TabStrip>
            <GroupTab $tone="on">指标</GroupTab>
            <GroupTab>模板</GroupTab>
            <GroupTab $tone="cyan">全部</GroupTab>
            {indicators.map((t) => <IndicatorTab key={t}>{t}</IndicatorTab>)}
          </TabStrip>
          <ZoomCell>
            <ZoomButton>+</ZoomButton><ZoomButton>-</ZoomButton><ZoomButton>0</ZoomButton>
          </ZoomCell>
          <ExtraStrip>
            <ExtraTab>扩展区</ExtraTab>
            <ExtraTab>关联报价</ExtraTab>
          </ExtraStrip>
        </ChartArea>

        <Panel>
          <StockTitle><Code>002120</Code>新海股份</StockTitle>
          <PairBlock rows={ratio} />
          <DepthBlock rows={asks} />
          <DepthBlock rows={bids} />
          <PairBlock rows={today} />
          <PairBlock rows={finance} />
          <Block $grow>
            <DataTable $row={18}>
              <Columns widths={[42, 46, 52, 26, 0]} />
              <tbody>
                {ticks.map(([time, price, volume, side, count], i) => (
                  <tr key={i}>
                    <Time $color="#d8d8d8">{time}</Time>
                    <Value $color={RED}>{price}</Value>
                    <Value $color={side ? YELLOW : "#a020b0"}>{volume}</Value>
                    <Side $color={side === "S" ? GREEN : "#f03030"} $light>{side}</Side>
                    <Value $color="#909090" $light>{count}</Value>
                  </tr>
                ))}
              </tbody>
            </DataTable>
          </Block>
          <PanelTabs>
            {["笔", "价", "细", "盘", "势", "指", "值", "筹"].map((t, i) => (
              <PanelTab key={t} $active={i === 0}>{t}</PanelTab>
            ))}
          </PanelTabs>
        </Panel>
      </Main>

      <ToolBar>
        {toolIcons.map(([name, icon]) => <Tool key={name} aria-label={name}>{icon}</Tool>)}
        <Rule />
        {toolIcons2.map(([name, icon]) => (
          <Tool key={name} aria-label={name} $bold={name === "RSI"}>{icon}</Tool>
        ))}
        <Rule />
        <Tool aria-label="F5"><FramedText text="F5" /></Tool>
        {["1", "5", "15", "30", "60", "N", "日", "周", "月", "多", "季", "年"].map((p) => (
          <Tool key={p} $on={p === "日"}>{p}</Tool>
        ))}
        <Rule />
      </ToolBar>
      <ScrollBar><Thumb /></ScrollBar>

      <StatusBar>
        <Icon size={14}>
          <rect width="16" height="16" rx="2" fill="#e8a828" />
          <path d="M6 3h7v6H6zM3 7h6v6H3z" stroke="#fff8e0" strokeWidth="1.500" />
        </Icon>
        {indexes.map(([name, value, change, percent, amount]) => (
          <IndexQuote key={name}>
            <IndexName>{name}</IndexName>
            <IndexValue>{value}</IndexValue>
            <IndexValue>{change}</IndexValue>
            <IndexValue>{percent}</IndexValue>
            <span>{amount}</span>
          </IndexQuote>
        ))}
        <Rule>&nbsp;</Rule>
        <Meter />
        <Rule>&nbsp;</Rule>
        <span>北京联通Z96</span>
        <ImeBar>
          <SogouIcon size={17} />
          <span>中</span>
          <Icon size={15}><path d="M10 1c4 6 0 13-9 10 3 5 14 5 14-4 0-3-2-5-5-6z" fill="#3c84c8" /></Icon>
          <Icon size={13}><circle cx="4" cy="5" r="2" stroke="#3c84c8" strokeWidth="1.500" /><path d="M11 10h3c0 3-1 4-3 5z" fill="#3c84c8" /></Icon>
          <Icon size={18}><rect x="0.500" y="3.500" width="15" height="10" stroke="#3c84c8" /><path d="M2 6h12M2 8.500h12" stroke="#3c84c8" strokeWidth="1.500" strokeDasharray="2 1" /><path d="M4 11.500h8" stroke="#3c84c8" strokeWidth="1.500" /></Icon>
          <Icon size={14}><circle cx="8" cy="4" r="3.500" fill="#a8a8a8" /><path d="M3 15V9h10v6z" fill="#a8a8a8" /></Icon>
          <Icon size={15}><path d="M5 1l3 2 3-2 5 3-2 4-2-1v8H4V7L2 8 0 4z" fill="#3c84c8" /></Icon>
          <Icon size={15}><path d="M2 14l7-7" stroke="#3c84c8" strokeWidth="3" /><path d="M12 1c-4-1-6 3-4 6s6 2 7-2l-3 2-2-2z" fill="#3c84c8" /></Icon>
        </ImeBar>
      </StatusBar>

      <TaskBar>
        <StartButton>
          <Icon size={20}>
            <path d="M1 3c2-1 4-1 6 0L6 8C4 7 3 7 1 8z" fill="#f0603c" />
            <path d="M8 3c2 1 4 1 6 0l-1 5c-2 1-4 1-6 0z" fill="#80c83c" />
            <path d="M0 9c2-1 4-1 6 0l-1 5c-2-1-4-1-6 0z" fill="#4c8cf0" />
            <path d="M7 9c2 1 4 1 6 0l-1 5c-2 1-4 1-6 0z" fill="#f8d03c" />
          </Icon>
          开始
        </StartButton>
        <Grip $gap={8} />
        <QuickLaunch>
          <Icon><rect x="1" y="2" width="13" height="12" rx="2" fill="#f0f4f8" /><path d="M4 5h6v6H4z" stroke="#3c74a8" /><path d="M6 10l7-8" stroke="#405c80" strokeWidth="1.500" /></Icon>
          <IeIcon />
        </QuickLaunch>
        <Grip $gap={4} />
        <TaskList>
          {tasks.map((t, i) => (
            <Task key={i} $active={i === 2}>
              {i === 2 ? <BrandIcon size={16} /> : <IeIcon />}
              {t}<Dots>...</Dots>
            </Task>
          ))}
        </TaskList>
        <LanguageBar>
          <Grip $gap={6} />
          <LanguageButton aria-label="输入法"><SogouIcon size={14} /></LanguageButton>
        </LanguageBar>
        <Tray>
          <Hide aria-label="隐藏图标"><Icon size={10}><path d="M10 2L4 8l6 6" stroke="#fff" strokeWidth="3" /></Icon></Hide>
          <Swirl size={16} />
          <Icon><path d="M1 2l5 4 4-3 5-2-3 6 2 7-5-3-7 3 2-6z" fill="#101828" /><path d="M3 3l10 10" stroke="#101828" strokeWidth="2" /></Icon>
          <Clock>18:06</Clock>
        </Tray>
      </TaskBar>

      <Watermark><Swirl />www.55188.com</Watermark>
    </Page>
  );
}
